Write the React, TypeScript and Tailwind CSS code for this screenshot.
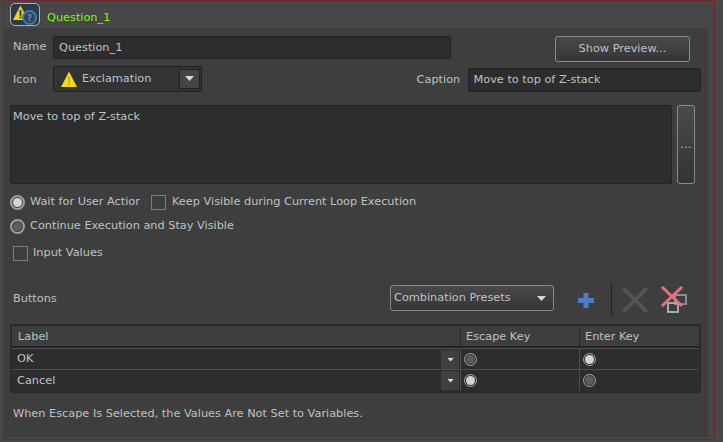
const font = "font-['DejaVu_Sans',sans-serif]";

function Arrow({ className = '' }: { className?: string }) {
  return (
    <svg width="9" height="5" viewBox="0 0 9 5" className={className}>
      <path d="M0 0h9L4.5 5z" fill="#d8d8d8" />
    </svg>
  );
}

function WarnIcon({ size = 16, mark = '#c9ad2c' }: { size?: number; mark?: string }) {
  return (
    <svg width={size} height={size} viewBox="0 0 16 16">
      <path d="M8 0.5 L16 16 H0 Z" fill="#f2d816" />
      <rect x="7.1" y="5.5" width="1.8" height="6" fill={mark} />
      <rect x="7.1" y="12.4" width="1.8" height="1.8" fill={mark} />
    </svg>
  );
}

function Radio({ checked, small }: { checked?: boolean; small?: boolean }) {
  const outer = small
    ? 'flex h-[13px] w-[13px] shrink-0 items-center justify-center rounded-full border border-[#a8a8a8] bg-[#333]'
    : 'flex h-[15px] w-[15px] shrink-0 items-center justify-center rounded-full border-2 border-[#a0a0a0] bg-[#444]';
  const inner = checked ? 'rounded-full bg-[#d4d4d4]' : 'rounded-full bg-[#5c5c5c]';
  return (
    <span className={outer}>
      <span className={'h-[9px] w-[9px] ' + inner} />
    </span>
  );
}

function Checkbox() {
  return <span className="block h-[15px] w-[15px] shrink-0 border border-[#7c7c7c] bg-[#3e3e3e]" />;
}

function Row({ label, escape, enter, last }: { label: string; escape?: boolean; enter?: boolean; last?: boolean }) {
  return (
    <div className={last ? 'flex h-[21px]' : 'flex h-[21px] border-b border-[#4e4e4e]'}>
      <div className="flex w-[449px] items-center justify-between border-r border-[#4e4e4e] pl-[5px] pr-px">
        <span>{label}</span>
        <span className="flex h-[19px] w-[18px] items-center justify-center bg-[#3f3f3f]">
          <Arrow className="scale-75" />
        </span>
      </div>
      <div className="flex w-[119px] items-center border-r border-[#4e4e4e] pl-[3px]">
        <Radio small checked={escape} />
      </div>
      <div className="flex flex-1 items-center pl-[3px]">
        <Radio small checked={enter} />
      </div>
    </div>
  );
}

export default function App() {
  return (
    <div className={`flex h-[442px] w-[723px] flex-col bg-[#484848] pb-[2px] pl-[3px] pr-[8px] text-[11.3px] leading-[16px] text-[#bdc3c6] ${font}`}>
      <div className="flex flex-1 flex-col border border-[#6b2a2a] bg-[#474747]">
        {/* title */}
        <div className="flex h-[27px] shrink-0 items-center gap-[7px] pl-[6px]">
          <div className="relative h-[23px] w-[30px] rounded-[5px] border border-[#b0b0b0] bg-[#2e3a4a]">
            <span className="absolute left-[2px] top-[1px]"><WarnIcon size={15} mark="#222" /></span>
            <span className="absolute bottom-0 right-[2px] flex h-[15px] w-[15px] items-center justify-center rounded-full border-2 border-[#3f78b8] bg-[#3a4250] text-[9px] font-bold text-[#5b8fd0]">?</span>
          </div>
          <span className="pt-[6px] text-[#7cfc00]">Question_1</span>
        </div>

        <div className="mr-[6px] flex flex-1 flex-col bg-[#3e3e3e] pl-[6px] pr-[7px] pt-[8px]">
          {/* name row */}
          <div className="flex h-[26px] items-start">
            <span className="mr-[4px] w-[39px] overflow-hidden whitespace-nowrap pl-[3px] pt-[3px]">Name</span>
            <div className="flex h-[23px] w-[398px] items-center rounded-[2px] border border-[#222] bg-[#2d2d2d] pl-[5px]">Question_1</div>
            <button className="ml-[104px] h-[26px] w-[135px] rounded-[3px] border border-[#8a8a8a] bg-gradient-to-b from-[#4a4a4a] to-[#353535]">Show Preview...</button>
          </div>
          {/* icon row */}
          <div className="mt-[3px] flex h-[27px] items-center">
            <span className="w-[43px] pl-[3px] pt-[2px]">Icon</span>
            <div className="flex h-[26px] w-[149px] items-center rounded-[2px] border border-[#222] bg-[#333] pl-[7px] pr-px">
              <WarnIcon />
              <span className="ml-[5px] flex-1 pt-px">Exclamation</span>
              <span className="flex h-[20px] w-[21px] items-center justify-center border border-[#222] bg-[#444]"><Arrow /></span>
            </div>
            <span className="ml-[215px] w-[51px] pt-[2px]">Caption</span>
            <div className="mt-[2px] flex h-[24px] w-[234px] items-center rounded-[2px] border border-[#222] bg-[#2d2d2d] pl-[5px]">Move to top of Z-stack</div>
          </div>
          {/* message */}
          <div className="mt-[13px] flex h-[79px] gap-[5px]">
            <div className="w-[662px] rounded-[2px] border border-[#222] bg-[#2d2d2d] pl-[2px] pt-[3px]">Move to top of Z-stack</div>
            <button className="flex w-[18px] items-center justify-center rounded-[3px] border border-[#8a8a8a] bg-gradient-to-b from-[#4a4a4a] to-[#333] leading-none">...</button>
          </div>
          {/* options */}
          <div className="mt-[10px] flex h-[16px] items-center">
            <Radio checked />
            <span className="ml-[5px] w-[110px] overflow-hidden whitespace-nowrap">Wait for User Action</span>
            <span className="ml-[11px]"><Checkbox /></span>
            <span className="ml-[6px]">Keep Visible during Current Loop Execution</span>
          </div>
          <div className="mt-[8px] flex h-[16px] items-center">
            <Radio />
            <span className="ml-[5px]">Continue Execution and Stay Visible</span>
          </div>
          <div className="mt-[11px] flex h-[16px] items-center pl-[3px]">
            <Checkbox />
            <span className="ml-[5px]">Input Values</span>
          </div>
          {/* buttons */}
          <div className="mt-[20px] flex h-[34px] items-center">
            <span className="w-[380px] pl-[3px] pt-[2px]">Buttons</span>
            <div className="flex h-[26px] w-[164px] items-center justify-between rounded-[3px] border border-[#8a8a8a] bg-gradient-to-b from-[#4a4a4a] to-[#353535] pl-[3px] pr-[7px]">
              <span>Combination Presets</span>
              <Arrow />
            </div>
            <svg width="16" height="15" viewBox="0 0 16 15" className="ml-[24px] mt-[4px]">
              <path d="M5.5 0h5v5H16v5h-5.500v5h-5v-5H0V5h5.500z" fill="#4c7cc8" />
            </svg>
            <span className="ml-[17px] mt-[3px] h-[33px] w-px bg-[#222]" />
            <svg width="28" height="26" viewBox="0 0 28 26" className="ml-[9px] mt-[3px]">
              <path d="M2 1 L26 25 M26 1 L2 25" stroke="#555" strokeWidth="3.5" />
            </svg>
            <svg width="30" height="28" viewBox="0 0 30 28" className="ml-[11px] mt-[3px]">
              <rect x="15" y="9" width="11" height="9" fill="none" stroke="#8c8c8c" strokeWidth="2" />
              <rect x="8" y="17" width="10" height="9" fill="none" stroke="#a8a8a8" strokeWidth="2" />
              <path d="M2 1 L22 20 M22 1 L2 20" stroke="#e8707e" strokeWidth="3" />
            </svg>
          </div>
          {/* table */}
          <div className="mt-[9px] w-[691px] rounded-[2px] border-2 border-[#2a2a2a] bg-[#2d2d2d]">
            <div className="flex h-[22px] border-b-2 border-[#222] bg-[#3e3e3e] pt-[2px]">
              <span className="flex w-[449px] items-center border-r border-[#2a2a2a] pl-[6px]">Label</span>
              <span className="flex w-[119px] items-center border-r border-[#2a2a2a] pl-[5px]">Escape Key</span>
              <span className="flex flex-1 items-center pl-[5px]">Enter Key</span>
            </div>
            <div className="border-t border-[#4e4e4e]">
              <Row label="OK" enter />
              <Row label="Cancel" escape last />
            </div>
          </div>
          <p className="mt-[13px] pl-[3px]">When Escape Is Selected, the Values Are Not Set to Variables.</p>
        </div>
        <div className="h-[2px] shrink-0" />
      </div>
    </div>
  );
}
